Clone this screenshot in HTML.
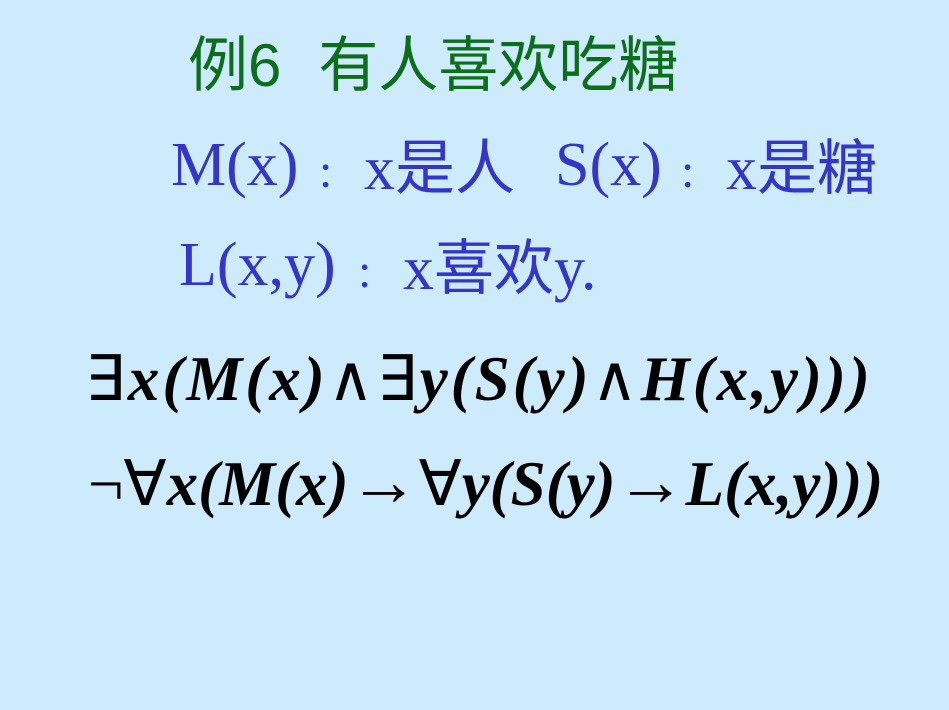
<!DOCTYPE html>
<html><head><meta charset="utf-8"><style>
html,body{margin:0;padding:0}
body{width:949px;height:710px;background:#cdebfd;position:relative;overflow:hidden}
.a{position:absolute;white-space:nowrap;line-height:1}
.t{left:188px;top:36px;font-size:60px;color:#0b6e1a;font-family:"Liberation Sans","Noto Sans CJK SC",sans-serif}
.b{color:#3535c8;font-family:"Liberation Serif","Noto Sans CJK SC",serif;font-size:62px}
.cj{font-family:"Noto Sans CJK SC",sans-serif;font-size:60px}
.k{font-size:48px}
.f{font-family:"Liberation Serif",serif;font-weight:bold;font-style:italic;font-size:63px;color:#000;letter-spacing:3px}
.n{font-style:normal;font-weight:normal}
</style></head><body>
<div class="a t">例6<span style="display:inline-block;width:37px"></span>有人喜欢吃糖</div>
<div class="a b" style="left:171px;top:134px">M(x)</div>
<div class="a b k" style="left:319px;top:148px">:</div>
<div class="a b" style="left:364px;top:134px">x<span class="cj">是人</span></div>
<div class="a b" style="left:555px;top:134px">S(x)</div>
<div class="a b k" style="left:681px;top:148px">:</div>
<div class="a b" style="left:726px;top:134px">x<span class="cj">是糖</span></div>
<div class="a b" style="left:179px;top:234px">L(x,y)</div>
<div class="a b k" style="left:358px;top:248px">:</div>
<div class="a b" style="left:403px;top:234px">x<span class="cj">喜欢</span>y.</div>
<div class="a f" style="left:85px;top:348px"><span class="n">∃</span>x(M(x)<span class="n">∧</span><span class="n">∃</span>y(S(y)<span class="n">∧</span>H(x,y)))</div>
<div class="a f" style="left:88px;top:448px;letter-spacing:0px"><span class="n">¬∀</span>x(M(x)<span class="n" style="font-size:70px">→</span><span class="n">∀</span>y(S(y)<span class="n" style="font-size:70px">→</span>L(x,y)))</div>
</body></html>
